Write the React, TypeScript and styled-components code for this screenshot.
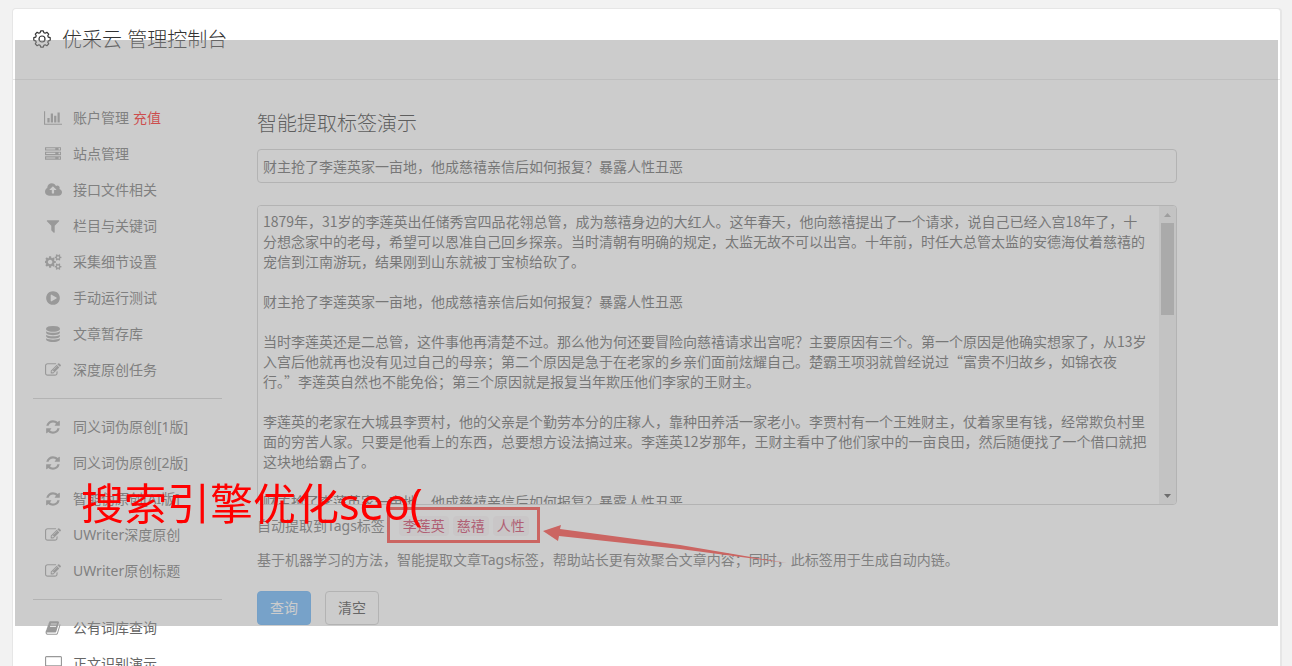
import React from "react";
import styled, { createGlobalStyle } from "styled-components";

const GlobalStyle = createGlobalStyle`
  * { box-sizing: border-box; }
  body {
    margin: 0;
    background: #f2f2f2;
    color: #666;
    font: 14px/20px "Noto Sans", "Noto Sans CJK SC", sans-serif;
  }
`;

const Page = styled.div`
  position: relative;
  padding: 8px 11px 0 12px;
`;

const Card = styled.div`
  min-height: calc(100vh - 8px);
  background: #fff;
  border: 1px solid #e6e6e6;
  border-bottom: 0;
  border-radius: 4px 4px 0 0;
  box-shadow: 1px 0 0 #e6e6e6;
`;

const Header = styled.header`
  display: flex;
  align-items: center;
  gap: 10px;
  height: 71px;
  padding: 0 19px 8px;
  border-bottom: 1px solid #e5e5e5;
  color: #333;
`;

const PageTitle = styled.h1`
  margin: 0;
  font-size: 20px;
  line-height: 30px;
  font-weight: 300;
`;

const Body = styled.div`
  display: flex;
  gap: 35px;
  padding: 20px 103px 0 20px;
`;

const Sidebar = styled.nav`
  flex: 0 0 189px;
`;

const MenuList = styled.ul`
  list-style: none;
  margin: 0;
  padding: 0;

  & + & {
    margin-top: 10px;
    padding-top: 10px;
    border-top: 1px solid #ccc;
  }
`;

const MenuItem = styled.li`
  display: flex;
  align-items: center;
  height: 36px;
  padding-left: 10px;
  gap: 10px;
`;

const MenuLink = styled.a<{ $alert?: boolean }>`
  color: ${(p) => (p.$alert ? "#f00" : "#666")};
  text-decoration: none;
  white-space: nowrap;
`;

const MenuLabel = styled.span`
  display: flex;
  gap: 4px;
`;

const IconBox = styled.span`
  display: flex;
  justify-content: center;
  flex: 0 0 20px;
  color: #999;
`;

const Main = styled.main`
  flex: 1;
  min-width: 0;
  padding-top: 9px;
`;

const SectionTitle = styled.h2`
  margin: 0 0 10px;
  font-size: 20px;
  line-height: 30px;
  font-weight: 300;
  color: #222;
`;

const TitleInput = styled.input`
  display: block;
  width: 100%;
  height: 34px;
  padding: 0 5px;
  border: 1px solid #ccc;
  border-radius: 4px;
  background: #fff;
  color: #555;
  font: inherit;
`;

const ArticleFrame = styled.div`
  display: flex;
  height: 300px;
  margin-top: 22px;
  border: 1px solid #ccc;
  border-radius: 4px;
  overflow: hidden;
`;

const ArticleBox = styled.textarea`
  flex: 1;
  min-width: 0;
  padding: 5px 8px 5px 5px;
  border: 0;
  background: #fff;
  color: #555;
  font: 14px/20px "Noto Sans CJK SC", sans-serif;
  resize: none;
  overflow-y: scroll;
  scrollbar-width: none;
`;

const ScrollBar = styled.div`
  display: flex;
  flex-direction: column;
  flex: 0 0 17px;
  background: #ededed;
`;

const ScrollArrow = styled.span<{ $active?: boolean }>`
  display: flex;
  align-items: center;
  justify-content: center;
  height: 17px;
  color: ${(p) => (p.$active ? "#404040" : "#a3a3a3")};
`;

const ScrollTrack = styled.div`
  flex: 1;
  padding: 0 2px;
`;

const ScrollThumb = styled.div`
  height: 35%;
  background: #bbb;
`;

const TagRow = styled.div`
  display: flex;
  align-items: center;
  gap: 4px;
  height: 20px;
  margin-top: 11px;
`;

const TagLabel = styled.span`
  margin-right: -4px;
`;

const Tag = styled.code`
  padding: 0 4px;
  border-radius: 4px;
  background: #f9f2f4;
  color: #c7254e;
  font: inherit;
`;

const Description = styled.p`
  margin: 14px 0 21px;
`;

const Actions = styled.div`
  display: flex;
  gap: 14px;
`;

const Button = styled.button<{ $primary?: boolean }>`
  width: 54px;
  height: 34px;
  padding: 0;
  border: 1px solid ${(p) => (p.$primary ? "#51a7f5" : "#ccc")};
  border-radius: 4px;
  background: ${(p) => (p.$primary ? "#55abf9" : "#fff")};
  color: ${(p) => (p.$primary ? "#fff" : "#333")};
  font: inherit;
`;

const Highlight = styled.div`
  position: absolute;
  left: 387px;
  top: 507px;
  width: 153px;
  height: 36px;
  border: 3px solid #fc302b;
  pointer-events: none;
`;

const Arrow = styled.svg`
  position: absolute;
  left: 540px;
  top: 520px;
  pointer-events: none;
`;

const Shade = styled.div`
  position: absolute;
  left: 15px;
  right: 14px;
  top: 40px;
  height: 586px;
  background: rgba(153, 153, 153, 0.5);
  pointer-events: none;
`;

const Caption = styled.div`
  position: absolute;
  left: 81px;
  top: 474px;
  color: #f00;
  font-size: 43px;
  line-height: 60px;
  white-space: nowrap;
  pointer-events: none;
`;

type IconName =
  | "chart" | "server" | "cloud" | "filter" | "cogs" | "play"
  | "database" | "edit" | "refresh" | "book" | "desktop";

const icons: Record<IconName, { w: number; d: string }> = {
  chart: { w: 2048, d: "M640 896v512h-256v-512h256zm384-512v1024h-256v-1024h256zm1024 1152v128h-2048v-1536h128v1408h1920zm-640-896v768h-256v-768h256zm384-384v1152h-256v-1152h256z" },
  server: { w: 1792, d: "M128 1408h1024v-128h-1024v128zm0-512h1024v-128h-1024v128zm1568 448q0-40-28-68t-68-28-68 28-28 68 28 68 68 28 68-28 28-68zm-1568-960h1024v-128h-1024v128zm1568 448q0-40-28-68t-68-28-68 28-28 68 28 68 68 28 68-28 28-68zm0-512q0-40-28-68t-68-28-68 28-28 68 28 68 68 28 68-28 28-68zm96 832v384h-1792v-384h1792zm0-512v384h-1792v-384h1792zm0-512v384h-1792v-384h1792z" },
  cloud: { w: 1920, d: "M1280 864q0-14-9-23l-352-352q-9-9-23-9t-23 9l-351 351q-10 12-10 24 0 14 9 23t23 9h224v352q0 13 9.5 22.5t22.5 9.5h192q13 0 22.5-9.5t9.5-22.5v-352h224q13 0 22.5-9.5t9.5-22.5zm640 288q0 159-112.5 271.5t-271.5 112.5h-1088q-185 0-316.5-131.5t-131.5-316.5q0-130 70-240t188-165q-2-30-2-43 0-212 150-362t362-150q156 0 285.5 87t188.5 231q71-62 166-62 106 0 181 75t75 181q0 76-41 138 130 31 213.5 135.5t83.5 238.5z" },
  filter: { w: 1792, d: "M1595 295q17 41-14 70l-493 493v742q0 42-39 59-13 5-25 5-27 0-45-19l-256-256q-19-19-19-45v-486l-493-493q-31-29-14-70 17-39 59-39h1280q42 0 59 39z" },
  cogs: { w: 1920, d: "M832 896q0-106-75-181t-181-75-181 75-75 181 75 181 181 75 181-75 75-181zm768 512q0-52-38-90t-90-38-90 38-38 90q0 53 37.5 90.5t90.5 37.5 90.5-37.5 37.5-90.5zm0-1024q0-52-38-90t-90-38-90 38-38 90q0 53 37.5 90.5t90.5 37.5 90.5-37.5 37.5-90.5zm-384 421v185q0 10-7 19.5t-16 10.5l-155 24q-11 35-32 76 34 48 90 115 7 11 7 20 0 12-7 19-23 30-82.5 89.5t-78.5 59.5q-11 0-21-7l-115-90q-37 19-77 31-11 108-23 155-7 24-30 24h-186q-11 0-20-7.5t-10-17.5l-23-153q-34-10-75-31l-118 89q-7 7-20 7-11 0-21-8-144-133-144-160 0-9 7-19 10-14 41-53t47-61q-23-44-35-82l-152-24q-10-1-17-9.5t-7-19.5v-185q0-10 7-19.5t16-10.5l155-24q11-35 32-76-34-48-90-115-7-11-7-20 0-12 7-20 22-30 82-89t79-59q11 0 21 7l115 90q34-18 77-32 11-108 23-154 7-24 30-24h186q11 0 20 7.5t10 17.5l23 153q34 10 75 31l118-89q8-7 20-7 11 0 21 8 144 133 144 160 0 8-7 19-12 16-42 54t-45 60q23 48 34 82l152 23q10 2 17 10.5t7 19.5zm640 533v140q0 16-149 31-12 27-30 52 51 113 51 138 0 4-4 7-122 71-124 71-8 0-46-47t-52-68q-20 2-30 2t-30-2q-14 21-52 68t-46 47q-2 0-124-71-4-3-4-7 0-25 51-138-18-25-30-52-149-15-149-31v-140q0-16 149-31 13-29 30-52-51-113-51-138 0-4 4-7 4-2 35-20t59-34 30-16q8 0 46 46.5t52 67.5q20-2 30-2t30 2q51-71 92-112l6-2q4 0 124 70 4 3 4 7 0 25-51 138 17 23 30 52 149 15 149 31zm0-1024v140q0 16-149 31-12 27-30 52 51 113 51 138 0 4-4 7-122 71-124 71-8 0-46-47t-52-68q-20 2-30 2t-30-2q-14 21-52 68t-46 47q-2 0-124-71-4-3-4-7 0-25 51-138-18-25-30-52-149-15-149-31v-140q0-16 149-31 13-29 30-52-51-113-51-138 0-4 4-7 4-2 35-20t59-34 30-16q8 0 46 46.5t52 67.5q20-2 30-2t30 2q51-71 92-112l6-2q4 0 124 70 4 3 4 7 0 25-51 138 17 23 30 52 149 15 149 31z" },
  play: { w: 1792, d: "M896 128q209 0 385.5 103t279.5 279.5 103 385.5-103 385.5-279.5 279.5-385.5 103-385.5-103-279.5-279.5-103-385.5 103-385.5 279.5-279.5 385.5-103zm384 823q32-18 32-55t-32-55l-544-320q-31-19-64-1-32 19-32 56v640q0 37 32 56 16 8 32 8 17 0 32-9z" },
  database: { w: 1792, d: "M896 768q237 0 443-43t325-127v170q0 69-103 128t-280 93.5-385 34.5-385-34.5-280-93.5-103-128v-170q119 84 325 127t443 43zm0 768q237 0 443-43t325-127v170q0 69-103 128t-280 93.5-385 34.5-385-34.5-280-93.5-103-128v-170q119 84 325 127t443 43zm0-384q237 0 443-43t325-127v170q0 69-103 128t-280 93.5-385 34.5-385-34.5-280-93.5-103-128v-170q119 84 325 127t443 43zm0-1152q208 0 385 34.5t280 93.5 103 128v128q0 69-103 128t-280 93.5-385 34.5-385-34.5-280-93.5-103-128v-128q0-69 103-128t280-93.5 385-34.5z" },
  edit: { w: 1792, d: "M888 1184l116-116-152-152-116 116v56h96v96h56zm440-720q-16-16-33 1l-350 350q-17 17-1 33t33-1l350-350q17-17 1-33zm80 594v190q0 119-84.5 203.5t-203.5 84.5h-832q-119 0-203.5-84.5t-84.5-203.5v-832q0-119 84.5-203.5t203.5-84.5h832q63 0 117 25 15 7 18 23 3 17-9 29l-49 49q-14 14-32 8-23-6-45-6h-832q-66 0-113 47t-47 113v832q0 66 47 113t113 47h832q66 0 113-47t47-113v-126q0-13 9-22l64-64q15-15 35-7t20 29zm-96-738l288 288-672 672h-288v-288zm444 132l-92 92-288-288 92-92q28-28 68-28t68 28l152 152q28 28 28 68t-28 68z" },
  refresh: { w: 1792, d: "M1639 1056q0 5-1 7-64 268-268 434.5t-478 166.5q-146 0-282.5-55t-243.5-157l-129 129q-19 19-45 19t-45-19-19-45v-448q0-26 19-45t45-19h448q26 0 45 19t19 45-19 45l-137 137q71 66 161 102t187 36q134 0 250-65t186-179q11-17 53-117 8-23 30-23h192q13 0 22.5 9.5t9.5 22.5zm25-800v448q0 26-19 45t-45 19h-448q-26 0-45-19t-19-45 19-45l138-138q-148-137-349-137-134 0-250 65t-186 179q-11 17-53 117-8 23-30 23h-199q-13 0-22.5-9.5t-9.5-22.5v-7q65-268 270-434.5t480-166.5q146 0 284 55.5t245 156.5l130-129q19-19 45-19t45 19 19 45z" },
  book: { w: 1792, d: "M1703 478q40 57 18 129l-275 906q-19 64-76.5 107.5t-122.5 43.5h-923q-77 0-148.5-53.5t-99.5-131.5q-24-67-2-127 0-4 3-27t4-37q1-8-3-21.5t-3-19.5q2-11 8-21t16.5-23.5 16.5-23.5q23-38 45-91.5t30-91.5q3-10 .5-30t-.5-28q3-11 17-28t17-23q21-36 42-92t25-90q1-9-2.5-32t.5-28q4-13 22-30.5t22-22.5q19-26 42.5-84.5t27.5-96.5q1-8-3-25.5t-2-26.5q2-8 9-18t18-23 17-21q8-12 16.5-30.5t15-35 16-36 19.5-32 26.5-23.5 36-11.5 47.5 5.5l-1 3q38-9 51-9h761q74 0 114 56t18 130l-274 906q-36 119-71.5 153.5t-128.5 34.5h-869q-27 0-38 15-11 16-1 43 24 70 144 70h923q29 0 56-15.5t35-41.5l300-987q7-22 5-57 38 15 59 43zm-1064 2q-4 13 2 22.5t20 9.5h608q13 0 25.5-9.5t16.5-22.5l21-64q4-13-2-22.5t-20-9.5h-608q-13 0-25.5 9.5t-16.5 22.5zm-83 256q-4 13 2 22.5t20 9.5h608q13 0 25.5-9.5t16.5-22.5l21-64q4-13-2-22.5t-20-9.5h-608q-13 0-25.5 9.5t-16.5 22.5z" },
  desktop: { w: 1920, d: "M1792 992v-832q0-13-9.5-22.5t-22.5-9.5h-1600q-13 0-22.5 9.5t-9.5 22.5v832q0 13 9.5 22.5t22.5 9.5h1600q13 0 22.5-9.5t9.5-22.5zm128-832v1088q0 66-47 113t-113 47h-544q0 37 16 77.5t32 71 16 43.5q0 26-19 45t-45 19h-512q-26 0-45-19t-19-45q0-14 16-44t32-70 16-78h-544q-66 0-113-47t-47-113v-1088q0-66 47-113t113-47h1600q66 0 113 47t47 113z" },
};

function Icon({ name }: { name: IconName }) {
  const { w, d } = icons[name];
  return (
    <IconBox aria-hidden="true">
      <svg width={Math.round(w / 112)} height="16" viewBox={`0 0 ${w} 1792`} fill="currentColor">
        <path fillRule="evenodd" d={d} />
      </svg>
    </IconBox>
  );
}

/* Gear outline: the rim alternates between a flat tooth and a flat notch. */
function gearRim(teeth: number, outer: number, inner: number) {
  const step = (Math.PI * 2) / teeth;
  const at = (r: number, a: number) =>
    `${(10 + r * Math.sin(a)).toFixed(2)} ${(9 - r * Math.cos(a)).toFixed(2)}`;
  const points: string[] = [];
  for (let i = 0; i < teeth; i++) {
    const a = i * step;
    points.push(
      at(outer, a - step * 0.2),
      at(outer, a + step * 0.2),
      at(inner, a + step * 0.36),
      at(inner, a + step * 0.64),
    );
  }
  return `M${points.join("L")}z`;
}

function GearIcon() {
  return (
    <svg width="20" height="20" viewBox="0 0 20 20" fill="none" stroke="currentColor" strokeWidth="1.2" strokeLinejoin="round" aria-hidden="true">
      <path d={gearRim(8, 8.3, 6.6)} />
      <circle cx="10" cy="9" r="3" />
    </svg>
  );
}

const menus: { icon: IconName; label: string; extra?: string }[][] = [
  [
    { icon: "chart", label: "账户管理", extra: "充值" },
    { icon: "server", label: "站点管理" },
    { icon: "cloud", label: "接口文件相关" },
    { icon: "filter", label: "栏目与关键词" },
    { icon: "cogs", label: "采集细节设置" },
    { icon: "play", label: "手动运行测试" },
    { icon: "database", label: "文章暂存库" },
    { icon: "edit", label: "深度原创任务" },
  ],
  [
    { icon: "refresh", label: "同义词伪原创[1版]" },
    { icon: "refresh", label: "同义词伪原创[2版]" },
    { icon: "refresh", label: "智能伪原创[AI版]" },
    { icon: "edit", label: "UWriter深度原创" },
    { icon: "edit", label: "UWriter原创标题" },
  ],
  [
    { icon: "book", label: "公有词库查询" },
    { icon: "desktop", label: "正文识别演示" },
  ],
];

const headline = "财主抢了李莲英家一亩地，他成慈禧亲信后如何报复？暴露人性丑恶";
const opening =
  "1879年，31岁的李莲英出任储秀宫四品花翎总管，成为慈禧身边的大红人。这年春天，他向慈禧提出了一个请求，说自己已经入宫18年了，十分想念家中的老母，希望可以恩准自己回乡探亲。当时清朝有明确的规定，太监无故不可以出宫。十年前，时任大总管太监的安德海仗着慈禧的宠信到江南游玩，结果刚到山东就被丁宝桢给砍了。";
const reasons =
  "当时李莲英还是二总管，这件事他再清楚不过。那么他为何还要冒险向慈禧请求出宫呢？主要原因有三个。第一个原因是他确实想家了，从13岁入宫后他就再也没有见过自己的母亲；第二个原因是急于在老家的乡亲们面前炫耀自己。楚霸王项羽就曾经说过“富贵不归故乡，如锦衣夜行。”李莲英自然也不能免俗；第三个原因就是报复当年欺压他们李家的王财主。";
const grudge =
  "李莲英的老家在大城县李贾村，他的父亲是个勤劳本分的庄稼人，靠种田养活一家老小。李贾村有一个王姓财主，仗着家里有钱，经常欺负村里面的穷苦人家。只要是他看上的东西，总要想方设法搞过来。李莲英12岁那年，王财主看中了他们家中的一亩良田，然后随便找了一个借口就把这块地给霸占了。";
const article = [opening, headline, reasons, grudge, headline].join("\n\n");

export default function App() {
  return (
    <Page>
      <GlobalStyle />
      <Card>
        <Header>
          <GearIcon />
          <PageTitle>优采云 管理控制台</PageTitle>
        </Header>
        <Body>
          <Sidebar>
            {menus.map((group, i) => (
              <MenuList key={i}>
                {group.map((item) => (
                  <MenuItem key={item.label}>
                    <Icon name={item.icon} />
                    <MenuLabel>
                      <MenuLink href="#">{item.label}</MenuLink>
                      {item.extra && <MenuLink href="#" $alert>{item.extra}</MenuLink>}
                    </MenuLabel>
                  </MenuItem>
                ))}
              </MenuList>
            ))}
          </Sidebar>
          <Main>
            <SectionTitle>智能提取标签演示</SectionTitle>
            <TitleInput aria-label="标题" defaultValue={headline} />
            <ArticleFrame>
              <ArticleBox aria-label="正文" defaultValue={article} spellCheck={false} />
              <ScrollBar aria-hidden="true">
                <ScrollArrow>
                  <svg width="7" height="4" viewBox="0 0 7 4"><path d="M0 4L3.5 0L7 4z" fill="currentColor" /></svg>
                </ScrollArrow>
                <ScrollTrack>
                  <ScrollThumb />
                </ScrollTrack>
                <ScrollArrow $active>
                  <svg width="7" height="4" viewBox="0 0 7 4"><path d="M0 0L3.5 4L7 0z" fill="currentColor" /></svg>
                </ScrollArrow>
              </ScrollBar>
            </ArticleFrame>
            <TagRow>
              <TagLabel>自动提取到Tags标签：</TagLabel>
              <Tag>李莲英</Tag>
              <Tag>慈禧</Tag>
              <Tag>人性</Tag>
            </TagRow>
            <Description>
              基于机器学习的方法，智能提取文章Tags标签，帮助站长更有效聚合文章内容；同时，此标签用于生成自动内链。
            </Description>
            <Actions>
              <Button type="button" $primary>查询</Button>
              <Button type="button">清空</Button>
            </Actions>
          </Main>
        </Body>
      </Card>
      <Highlight />
      <Arrow width="250" height="50" viewBox="0 0 250 50" aria-hidden="true">
        <path d="M3 11L21 5L20 9L140 25L247 43L140 29L19 16L18 21z" fill="#fc302b" />
      </Arrow>
      <Shade />
      <Caption>搜索引擎优化seo(</Caption>
    </Page>
  );
}
